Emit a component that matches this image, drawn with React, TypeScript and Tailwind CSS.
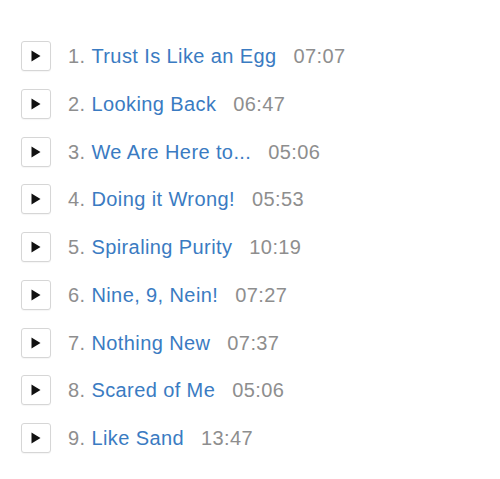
const TRACKS = [
  { title: "Trust Is Like an Egg", time: "07:07" },
  { title: "Looking Back", time: "06:47" },
  { title: "We Are Here to...", time: "05:06" },
  { title: "Doing it Wrong!", time: "05:53" },
  { title: "Spiraling Purity", time: "10:19" },
  { title: "Nine, 9, Nein!", time: "07:27" },
  { title: "Nothing New", time: "07:37" },
  { title: "Scared of Me", time: "05:06" },
  { title: "Like Sand", time: "13:47" },
];

export default function App() {
  return (
    <div className="w-[500px] h-[479px] bg-white overflow-hidden font-['Liberation_Sans',Arial,sans-serif]">
      <ul className="pt-[41px] pl-[21px] flex flex-col gap-[17.75px]">
        {TRACKS.map((t, i) => (
          <li key={t.title} className="flex items-center h-[30px] text-[20px] tracking-[0.4px] leading-none">
            <button className="w-[30px] h-[30px] shrink-0 flex items-center justify-center border border-[#d6d6d6] rounded-[3px] bg-white shadow-[0_1px_1px_rgba(0,0,0,0.04)]">
              <svg width="10" height="12" viewBox="0 0 10 12" aria-hidden>
                <path d="M0.5 0.5L9.5 6L0.5 11.5Z" fill="#111" />
              </svg>
            </button>
            <span className="ml-[17px] text-[#8e8e8e] whitespace-pre">{`${i + 1}. `}</span>
            <a href="#" className="text-[#3a7bc2]">
              {t.title}
            </a>
            <span className="ml-[17px] text-[#8e8e8e]">{t.time}</span>
          </li>
        ))}
      </ul>
    </div>
  );
}
